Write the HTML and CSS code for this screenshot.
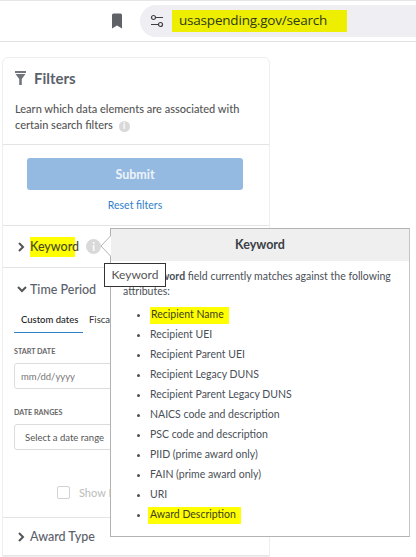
FILE: index.html
```html
<!DOCTYPE html>
<html lang="en">
<head>
    <meta charset="UTF-8">
    <meta name="viewport" content="width=device-width, initial-scale=1.0">
    <title>Search filters</title>
    <link rel="stylesheet" href="styles.css">
</head>
<body>
    <div class="toolbar">
        <svg class="bookmark" width="12" height="16" viewBox="0 0 12 16"><path d="M1 2a1.500 1.500 0 0 1 1.500-1.500h7A1.500 1.500 0 0 1 11 2v13.500l-5-3-5 3z" fill="#5f6368"/></svg>
        <div class="omnibox">
            <svg class="tune" width="14" height="14" viewBox="0 0 14 14" fill="none" stroke="#3c4043" stroke-width="1.200"><circle cx="3.500" cy="3.500" r="2"/><path d="M5.500 3.500H13M1 10.500h7.500"/><circle cx="10.500" cy="10.500" r="2"/></svg>
            <span class="url">usaspending.gov/search</span>
        </div>
    </div>

    <div class="card">
        <div class="filters-head">
            <h2 class="filters-title">
                <svg width="11" height="14" viewBox="0 0 11 14"><path d="M0 0h11v2H0zM0.500 3h10L6.800 8v6H4.200V8z" fill="#71767e"/></svg>
                Filters
            </h2>
            <p class="filters-note">Learn which data elements are associated with certain search filters <span class="info info-small">i</span></p>
        </div>
        <div class="submit-box">
            <button class="submit">Submit</button>
            <a class="reset">Reset filters</a>
        </div>
        <div class="row">
            <svg class="chev-right" width="7" height="10" viewBox="0 0 7 10" fill="none" stroke="#555" stroke-width="2"><path d="M1 1l4 4-4 4"/></svg>
            <span class="row-title mark-keyword">Keyword</span>
            <span class="info">i</span>
        </div>
        <div class="time">
            <div class="row-plain">
                <svg class="chev-down" width="10" height="7" viewBox="0 0 10 7" fill="none" stroke="#555" stroke-width="2"><path d="M1 1l4 4 4-4"/></svg>
                <span class="row-title">Time Period</span>
            </div>
            <div class="tabs">
                <span class="tab tab-on">Custom dates</span>
                <span class="tab">Fiscal years</span>
            </div>
            <label class="field-label">START DATE</label>
            <div class="field field-date">mm/dd/yyyy</div>
            <label class="field-label label-ranges">DATE RANGES</label>
            <div class="field field-select">Select a date range</div>
            <div class="check-row">
                <span class="checkbox"></span>
                <span class="check-text">Show New Awards Only</span>
            </div>
        </div>
        <div class="row row-last">
            <svg class="chev-right" width="7" height="10" viewBox="0 0 7 10" fill="none" stroke="#555" stroke-width="2"><path d="M1 1l4 4-4 4"/></svg>
            <span class="row-title">Award Type</span>
        </div>
    </div>

    <div class="popover">
        <svg class="arrow" width="11" height="22" viewBox="0 0 11 22"><path d="M11 0.500L1 11l10 10.500" fill="#fff" stroke="#b3b3b3"/></svg>
        <div class="popover-head">Keyword</div>
        <div class="popover-body">
            <p>The <b>Keyword</b> field currently matches against the following attributes:</p>
            <ul>
                <li><span class="mark">Recipient Name</span></li>
                <li>Recipient UEI</li>
                <li>Recipient Parent UEI</li>
                <li>Recipient Legacy DUNS</li>
                <li>Recipient Parent Legacy DUNS</li>
                <li>NAICS code and description</li>
                <li>PSC code and description</li>
                <li>PIID (prime award only)</li>
                <li>FAIN (prime award only)</li>
                <li>URI</li>
                <li><span class="mark mark-award">Award Description</span></li>
            </ul>
        </div>
    </div>
    <div class="tooltip">Keyword</div>
</body>
</html>
```

FILE: styles.css
```css
* {
    box-sizing: border-box;
}
body {
    margin: 0;
    width: 416px;
    height: 557px;
    overflow: hidden;
    background: #fff;
    position: relative;
    font-family: Lato, "Noto Sans", Arial, sans-serif;
    color: #4a4f57;
}

.toolbar {
    height: 42px;
    border-top: 1px solid #e6e6e6;
    border-bottom: 1px solid #e3e3e3;
    display: flex;
    align-items: center;
    padding-left: 111px;
}
.bookmark {
    margin-right: 17px;
}
.omnibox {
    flex: 1;
    height: 32px;
    margin-top: -1px;
    background: #eeeef3;
    border-radius: 16px 0 0 16px;
    display: flex;
    align-items: center;
    padding-left: 10px;
}
.tune {
    margin-right: 8px;
}
.url {
    font-size: 13.500px;
    color: #2d3a1a;
    background: #eeee00;
    padding: 0 20px 2px 7px;
    line-height: 20px;
    font-family: "Open Sans", Arial, sans-serif;
    letter-spacing: -0.2px;
}

.card {
    margin: 15px 0 0 2px;
    width: 268px;
    border: 1px solid #eee;
    border-radius: 6px 6px 0 0;
}
.filters-head {
    padding: 10px 12px 0 12px;
    height: 87px;
    border-bottom: 1px solid #e4e4e4;
}
.filters-title {
    margin: 0;
    font-size: 15px;
    font-weight: 700;
    color: #5b616b;
    display: flex;
    align-items: center;
    gap: 8px;
    line-height: 20px;
}
.filters-note {
    margin: 13px 0 0 0;
    font-size: 11px;
    line-height: 16px;
    font-weight: 500;
    color: #555;
    width: 240px;
}
.info {
    display: inline-flex;
    width: 15px;
    height: 15px;
    border-radius: 50%;
    background: #d9d9d9;
    color: #fff;
    font-size: 11px;
    font-weight: 700;
    align-items: center;
    justify-content: center;
    margin-left: 7px;
}
.info-small {
    width: 11px;
    height: 11px;
    font-size: 9px;
    margin-left: 3px;
}

.submit-box {
    height: 81px;
    padding: 13px 0 0 24px;
    border-bottom: 1px solid #e4e4e4;
}
.submit {
    display: block;
    width: 216px;
    height: 32px;
    border: 0;
    border-radius: 3px;
    background: #94bae1;
    color: #eef3f9;
    font-family: inherit;
    font-size: 12.500px;
    font-weight: 700;
}
.reset {
    display: block;
    width: 216px;
    margin-top: 8px;
    text-align: center;
    font-size: 10.500px;
    line-height: 14px;
    color: #2f7fc9;
}

.row {
    height: 42px;
    padding-left: 15px;
    display: flex;
    align-items: center;
    border-bottom: 1px solid #e4e4e4;
}
.row-last {
    height: 38px;
}
.chev-right {
    margin-right: 5px;
}
.row-title {
    font-size: 12.500px;
    font-weight: 500;
    color: #5b616b;
}
.mark-keyword {
    background: linear-gradient(#ffff00, #ffff00) no-repeat;
    background-size: 45px 100%;
    color: #4a4a20;
    padding: 2px 0 3px 0;
}

.time {
    height: 250px;
    border-bottom: 1px solid #e4e4e4;
    padding: 12px 0 0 11px;
}
.row-plain {
    display: flex;
    align-items: center;
    gap: 3px;
    padding-left: 3px;
    height: 18px;
}
.tabs {
    display: flex;
    margin-top: 14px;
    height: 21px;
}
.tab {
    font-size: 9.500px;
    color: #333;
    padding: 0 6px;
    line-height: 15px;
    height: 21px;
}
.tab-on {
    border-bottom: 1px solid #2f7fc9;
    width: 69px;
    padding: 0 7px;
    white-space: nowrap;
    color: #222;
    font-weight: 500;
}
.field-label {
    display: block;
    margin-top: 14px;
    font-size: 7.200px;
    font-weight: 700;
    color: #666;
    line-height: 10px;
}
.label-ranges {
    margin-top: 19px;
}
.field {
    width: 240px;
    height: 26px;
    border: 1px solid #dcdcdc;
    border-radius: 3px;
    margin-top: 6px;
    display: flex;
    align-items: center;
    font-size: 9.500px;
}
.field-date {
    padding-left: 6px;
    color: #777;
}
.field-select {
    padding-left: 10px;
    color: #555;
}
.check-row {
    display: flex;
    align-items: center;
    margin: 36px 0 0 43px;
    gap: 9px;
}
.checkbox {
    width: 13px;
    height: 13px;
    border: 1px solid #d2d2d2;
    border-radius: 2px;
}
.check-text {
    font-size: 11px;
    color: #bbb;
    white-space: nowrap;
}

.popover {
    position: absolute;
    left: 110px;
    top: 228px;
    width: 300px;
    height: 309px;
    background: #fff;
    border: 1px solid #b3b3b3;
    border-right-color: #c4c4c4;
}
.arrow {
    position: absolute;
    left: -11px;
    top: 6px;
}
.popover-head {
    height: 32px;
    background: #efefef;
    text-align: center;
    font-size: 12.500px;
    font-weight: 700;
    color: #3a3f47;
    line-height: 32px;
}
.popover-body {
    padding: 8px 12px 0 12px;
    font-size: 10.500px;
    color: #4a4f57;
}
.popover-body p {
    margin: 0;
    line-height: 15px;
}
.popover-body ul {
    margin: 7px 0 0 0;
    padding: 0 0 0 27px;
    list-style: disc;
}
.popover-body li {
    height: 20px;
    line-height: 16px;
}
.mark {
    background: #ffff00;
    color: #40401a;
    padding: 1px 5px 4px 1px;
}
.mark-award {
    margin-left: -2px;
    padding-left: 2px;
}

.tooltip {
    position: absolute;
    left: 104px;
    top: 263px;
    width: 62px;
    height: 24px;
    background: #fff;
    border: 1px solid #333;
    font-size: 12px;
    line-height: 21px;
    text-align: center;
    color: #555;
}
```
